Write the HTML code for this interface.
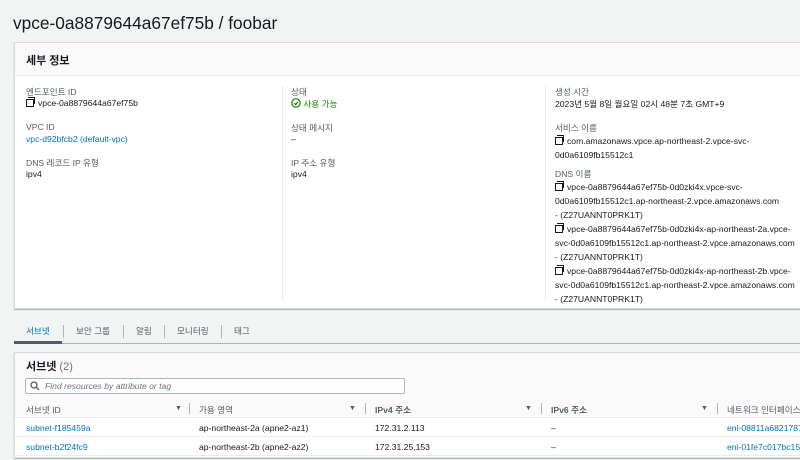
<!DOCTYPE html>
<html><head><meta charset="utf-8"><style>
*{box-sizing:border-box;margin:0;padding:0}
body{width:800px;height:460px;overflow:hidden;background:#f2f3f3;font-family:"Liberation Sans","Noto Sans CJK KR",sans-serif;font-size:8.6px;color:#16191f;position:relative}
.abs{position:absolute;white-space:nowrap}
.lbl{color:#545b64}
.link{color:#0073bb}
.cp{display:inline-block;width:8px;height:8px;border:1.3px solid #16191f;position:relative;margin:0 4px 0 2px;vertical-align:-1px}
.cp:before{content:"";position:absolute;left:1px;top:-3px;width:6px;height:6px;border-top:1.3px solid #16191f;border-right:1.3px solid #16191f}
.sort{font-size:7px;color:#545b64}
.vd{position:absolute;width:1px;background:#aab7b8}
</style></head><body>
<div class="abs" style="left:13px;top:13px;font-size:17.3px;color:#16191f">vpce-0a8879644a67ef75b / foobar</div>

<div class="abs" style="left:14px;top:42px;width:800px;height:267px;background:#fff;border:1px solid #d5dbdb;box-shadow:0 1px 1px rgba(0,28,36,.3)">
 <div style="height:33px;background:#fafafa;border-bottom:1px solid #eaeded"></div>
</div>
<div class="abs" style="left:26px;top:52px;font-size:11px;font-weight:bold;color:#16191f">세부 정보</div>
<div class="vd" style="left:282px;top:86px;height:215px;background:#eaeded"></div>
<div class="vd" style="left:545px;top:86px;height:215px;background:#eaeded"></div>

<div class="abs lbl" style="left:26px;top:86px">엔드포인트 ID</div>
<div class="abs" style="left:26px;top:98px"><span class="cp" style="margin-left:0"></span>vpce-0a8879644a67ef75b</div>
<div class="abs lbl" style="left:26px;top:122px">VPC ID</div>
<div class="abs link" style="left:26px;top:134px">vpc-d92bfcb2 (default-vpc)</div>
<div class="abs lbl" style="left:26px;top:157px">DNS 레코드 IP 유형</div>
<div class="abs" style="left:26px;top:169px">ipv4</div>

<div class="abs lbl" style="left:291px;top:86px">상태</div>
<div class="abs" style="left:291px;top:98px;color:#1d8102"><svg width="10" height="10" viewBox="0 0 10 10" style="vertical-align:-1px"><circle cx="5" cy="5" r="4.2" fill="none" stroke="#1d8102" stroke-width="1.2"/><path d="M3 5.2 4.5 6.6 7 3.8" fill="none" stroke="#1d8102" stroke-width="1.2"/></svg> 사용 가능</div>
<div class="abs lbl" style="left:291px;top:122px">상태 메시지</div>
<div class="abs" style="left:291px;top:134px">–</div>
<div class="abs lbl" style="left:291px;top:157px">IP 주소 유형</div>
<div class="abs" style="left:291px;top:169px">ipv4</div>

<div class="abs lbl" style="left:555px;top:86px">생성 시간</div>
<div class="abs" style="left:555px;top:98px">2023년 5월 8일 월요일 02시 48분 7초 GMT+9</div>
<div class="abs lbl" style="left:555px;top:122px">서비스 이름</div>
<div class="abs" style="left:555px;top:134px;line-height:14px"><span class="cp" style="margin-left:0"></span>com.amazonaws.vpce.ap-northeast-2.vpce-svc-<br>0d0a6109fb15512c1</div>
<div class="abs lbl" style="left:555px;top:168px">DNS 이름</div>
<div class="abs" style="left:555px;top:180px;line-height:14px"><span class="cp" style="margin-left:0"></span>vpce-0a8879644a67ef75b-0d0zki4x.vpce-svc-<br>0d0a6109fb15512c1.ap-northeast-2.vpce.amazonaws.com<br>- (Z27UANNT0PRK1T)<br><span class="cp" style="margin-left:0"></span>vpce-0a8879644a67ef75b-0d0zki4x-ap-northeast-2a.vpce-<br>svc-0d0a6109fb15512c1.ap-northeast-2.vpce.amazonaws.com<br>- (Z27UANNT0PRK1T)<br><span class="cp" style="margin-left:0"></span>vpce-0a8879644a67ef75b-0d0zki4x-ap-northeast-2b.vpce-<br>svc-0d0a6109fb15512c1.ap-northeast-2.vpce.amazonaws.com<br>- (Z27UANNT0PRK1T)</div>

<!-- tabs -->
<div class="abs" style="left:14px;top:343px;width:786px;height:1px;background:#aab7b8"></div>
<div class="abs" style="left:14px;top:341px;width:48px;height:3px;background:#545b64"></div>
<div class="abs" style="left:26px;top:325px;color:#0073bb">서브넷</div>
<div class="vd" style="left:63px;top:325px;height:13px"></div>
<div class="abs" style="left:76px;top:325px;color:#545b64">보안 그룹</div>
<div class="vd" style="left:123px;top:325px;height:13px"></div>
<div class="abs" style="left:136px;top:325px;color:#545b64">알림</div>
<div class="vd" style="left:164px;top:325px;height:13px"></div>
<div class="abs" style="left:177px;top:325px;color:#545b64">모니터링</div>
<div class="vd" style="left:221px;top:325px;height:13px"></div>
<div class="abs" style="left:234px;top:325px;color:#545b64">태그</div>

<!-- subnet panel -->
<div class="abs" style="left:14px;top:352px;width:800px;height:106px;background:#fff;border:1px solid #d5dbdb;box-shadow:0 1px 1px rgba(0,28,36,.3)">
 <div style="height:65px;background:#fafafa;border-bottom:1px solid #eaeded"></div>
 <div style="height:19px;border-bottom:1px solid #eaeded"></div>
 <div style="height:19px;border-bottom:1px solid #eaeded"></div>
</div>
<div class="abs" style="left:26px;top:358px;font-size:11px;font-weight:bold">서브넷 <span style="font-weight:normal;color:#687078">(2)</span></div>
<div class="abs" style="left:25px;top:378px;width:380px;height:16px;background:#fff;border:1px solid #aab7b8;border-radius:2px"></div>
<svg class="abs" style="left:30px;top:381px" width="10" height="10" viewBox="0 0 10 10"><circle cx="4" cy="4" r="3" fill="none" stroke="#545b64" stroke-width="1.3"/><path d="M6.2 6.2 9 9" stroke="#545b64" stroke-width="1.3"/></svg>
<div class="abs" style="left:45px;top:381px;color:#687078;font-style:italic">Find resources by attribute or tag</div>

<div class="abs lbl" style="left:26px;top:404px">서브넷 ID</div>
<div class="abs sort" style="left:175px;top:405px">▼</div><div class="vd" style="left:189px;top:403px;height:11px"></div>
<div class="abs lbl" style="left:199px;top:404px">가용 영역</div>
<div class="abs sort" style="left:349px;top:405px">▼</div><div class="vd" style="left:365px;top:403px;height:11px"></div>
<div class="abs lbl" style="left:375px;top:404px;font-weight:bold">IPv4 주소</div>
<div class="abs sort" style="left:525px;top:405px">▼</div><div class="vd" style="left:541px;top:403px;height:11px"></div>
<div class="abs lbl" style="left:551px;top:404px;font-weight:bold">IPv6 주소</div>
<div class="abs sort" style="left:701px;top:405px">▼</div><div class="vd" style="left:717px;top:403px;height:11px"></div>
<div class="abs lbl" style="left:727px;top:404px">네트워크 인터페이스</div>

<div class="abs link" style="left:26px;top:423px">subnet-f185459a</div>
<div class="abs" style="left:199px;top:423px">ap-northeast-2a (apne2-az1)</div>
<div class="abs" style="left:375px;top:423px">172.31.2.113</div>
<div class="abs" style="left:551px;top:423px">–</div>
<div class="abs link" style="left:727px;top:423px">eni-08811a68217873</div>
<div class="abs link" style="left:26px;top:442px">subnet-b2f24fc9</div>
<div class="abs" style="left:199px;top:442px">ap-northeast-2b (apne2-az2)</div>
<div class="abs" style="left:375px;top:442px">172.31.25.153</div>
<div class="abs" style="left:551px;top:442px">–</div>
<div class="abs link" style="left:727px;top:442px">eni-01fe7c017bc15</div>
</body></html>
